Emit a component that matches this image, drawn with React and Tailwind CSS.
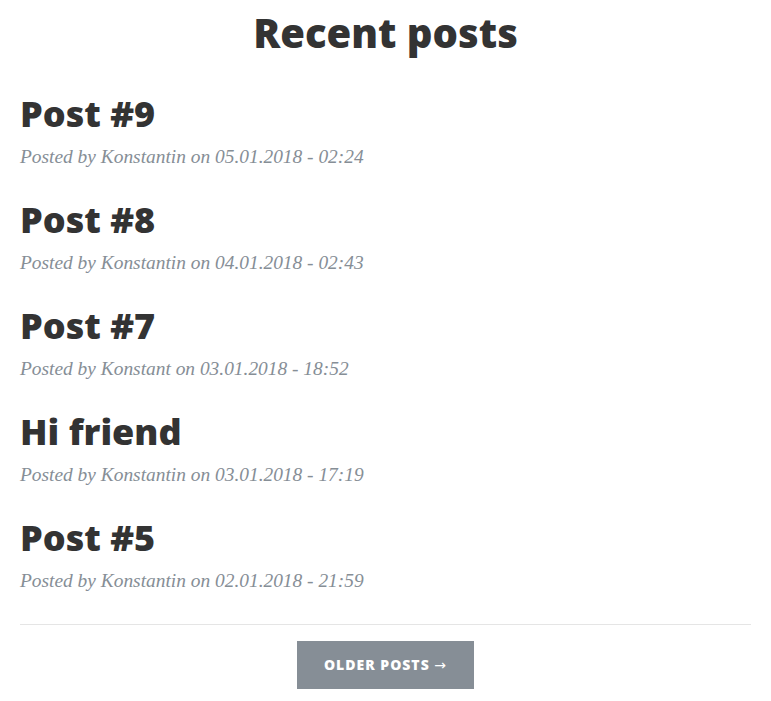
const posts = [
  { title: 'Post #9', author: 'Konstantin', date: '05.01.2018 - 02:24' },
  { title: 'Post #8', author: 'Konstantin', date: '04.01.2018 - 02:43' },
  { title: 'Post #7', author: 'Konstant', date: '03.01.2018 - 18:52' },
  { title: 'Hi friend', author: 'Konstantin', date: '03.01.2018 - 17:19' },
  { title: 'Post #5', author: 'Konstantin', date: '02.01.2018 - 21:59' },
]

function PostPreview({ title, author, date }) {
  return (
    <div className="pt-[30px]">
      <a href="#" className="block">
        <h2 className="text-[36px] leading-[1.1] font-extrabold text-[#333] mb-[10px] font-['Open_Sans',sans-serif]">
          {title}
        </h2>
      </a>
      <p className="text-[19.4px] leading-[26.5px] italic text-[#868e96] font-['Liberation_Serif',serif]">
        Posted by <a href="#">{author}</a> on {date}
      </p>
    </div>
  )
}

export default function App() {
  return (
    <div className="bg-white min-h-[701px] px-5 font-['Open_Sans',sans-serif]">
      <h1 className="pt-[11px] text-center text-[40px] leading-[1.1] font-extrabold text-[#333]">
        Recent posts
      </h1>
      <div className="mt-[9px]">
        {posts.map((p) => (
          <PostPreview key={p.title} {...p} />
        ))}
      </div>
      <hr className="mt-[30px] border-t border-[#e5e5e5]" />
      <div className="flex justify-center mt-4">
        <a
          href="#"
          className="bg-[#868e96] text-white text-[14px] leading-[18px] font-extrabold tracking-[1px] uppercase px-[27px] py-[15px]"
        >
          Older Posts <span className="font-['DejaVu_Sans',sans-serif] font-normal">&rarr;</span>
        </a>
      </div>
    </div>
  )
}
